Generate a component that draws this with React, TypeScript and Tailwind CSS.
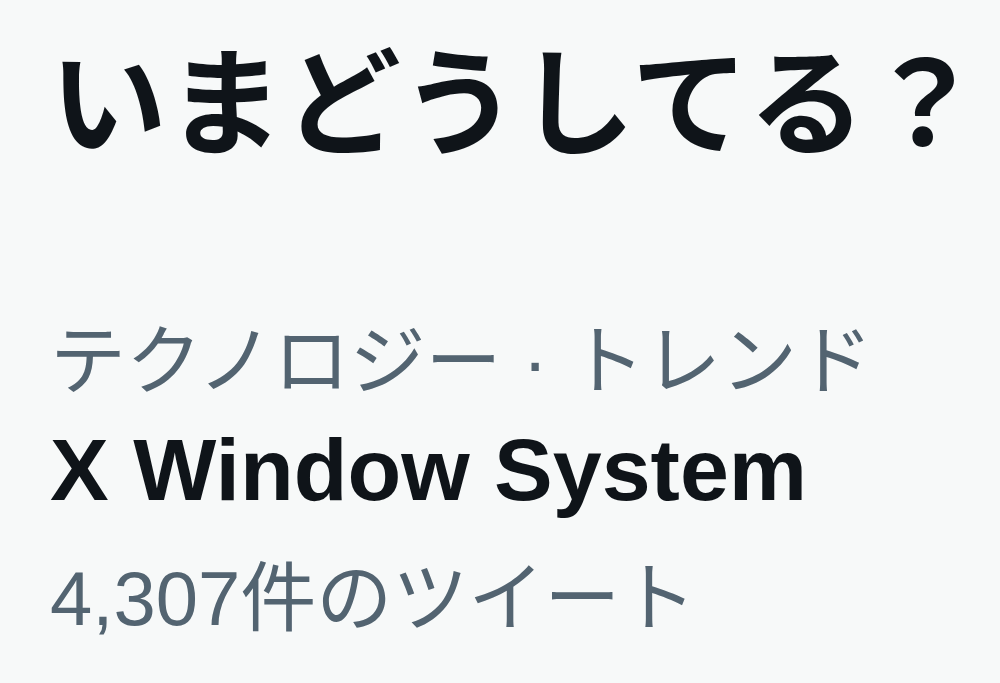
export default function App() {
  return (
    <div
      className="w-[1000px] h-[683px] bg-[#f7f9f9] overflow-hidden pl-[50px] pt-[25px]"
      style={{ fontFamily: '"Liberation Sans", "Noto Sans CJK JP", sans-serif' }}
    >
      <h2
        className="text-[117px] leading-[140px] font-bold text-[#0f1419] whitespace-nowrap"
        style={{ fontFamily: '"Noto Sans CJK JP", sans-serif' }}
      >
        いまどうしてる？
      </h2>
      <div className="mt-[150px] flex flex-col">
        <div className="text-[76px] leading-[94px] text-[#536471] whitespace-nowrap">
          テクノロジー · トレンド
        </div>
        <div className="mt-[2px] text-[88px] leading-[117px] font-bold text-[#0f1419] whitespace-nowrap">
          X Window System
        </div>
        <div className="mt-[24px] text-[76px] leading-[94px] text-[#536471] whitespace-nowrap">
          4,307件のツイート
        </div>
      </div>
    </div>
  );
}
